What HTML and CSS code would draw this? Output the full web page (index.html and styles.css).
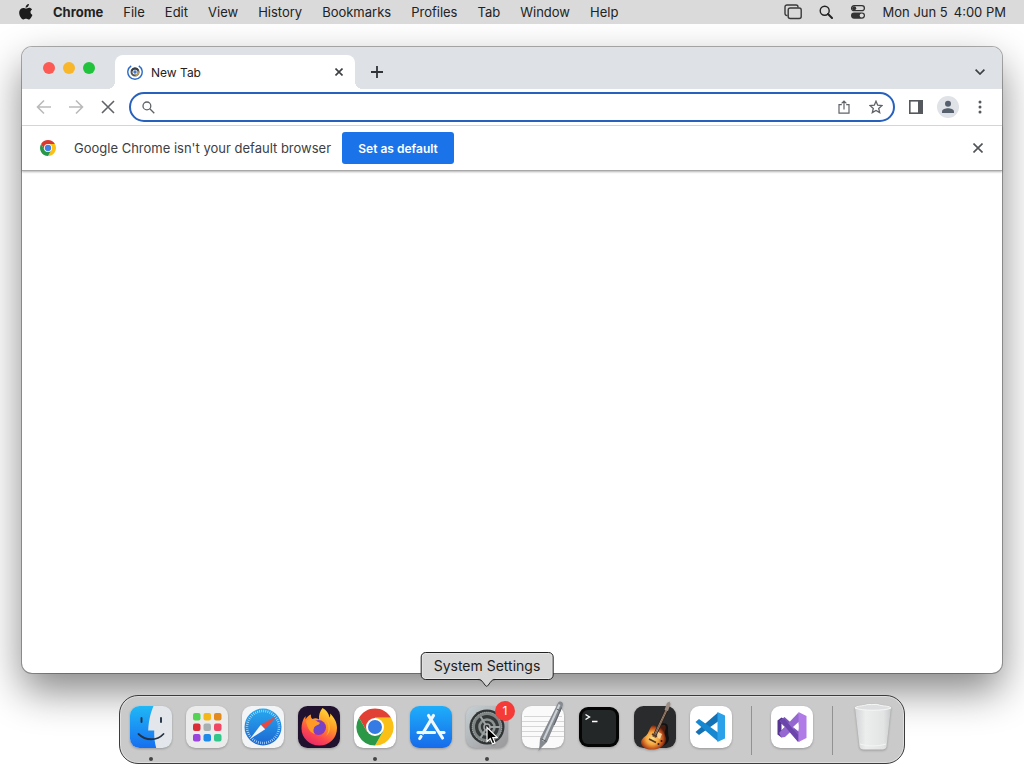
FILE: index.html
```html
<!DOCTYPE html>
<html lang="en">
<head>
    <meta charset="UTF-8">
    <meta name="viewport" content="width=device-width, initial-scale=1.0">
    <title>New Tab</title>
    <link rel="stylesheet" href="styles.css">
</head>
<body>
    <!-- Menu Bar -->
    <header class="menubar">
        <nav class="menus">
            <a href="#" class="apple" aria-label="Apple menu">
                <svg width="14" height="16" viewBox="0 0 14 16"><path fill="#1c1c1c" d="M9.9 0c.1 1-.3 1.900-.9 2.600-.6.700-1.500 1.200-2.400 1.100-.1-.9.300-1.900.9-2.500C8.100.500 9.100 0 9.900 0zM13.100 5.500c-1.100.7-1.600 1.500-1.600 2.600 0 1.300.7 2.300 1.900 2.800-.3.900-.7 1.700-1.300 2.500-.7 1.100-1.400 2.100-2.500 2.100s-1.400-.7-2.600-.7-1.600.7-2.600.7c-1.100 0-1.900-1-2.600-2C.3 11.600-.5 8.200.9 5.900c.7-1.200 2-2 3.300-2 1.200 0 2 .7 2.900.7s1.600-.8 3-.8c1.200 0 2.300.6 3 1.700z"/></svg>
            </a>
            <a href="#" class="app-name">Chrome</a>
            <a href="#">File</a>
            <a href="#">Edit</a>
            <a href="#">View</a>
            <a href="#">History</a>
            <a href="#">Bookmarks</a>
            <a href="#">Profiles</a>
            <a href="#">Tab</a>
            <a href="#">Window</a>
            <a href="#">Help</a>
        </nav>
        <div class="status">
            <button aria-label="Stage Manager">
                <svg width="18" height="16" viewBox="0 0 18 16" fill="none" stroke="#3a3a3a" stroke-width="1.400"><path d="M3.500 11.500H3a2 2 0 0 1-2-2V3a2 2 0 0 1 2-2h9a2 2 0 0 1 2 2v.5"/><rect x="4.200" y="4" width="13" height="10.500" rx="2"/></svg>
            </button>
            <button aria-label="Spotlight">
                <svg width="14" height="14" viewBox="0 0 14 14" fill="none" stroke="#222"><circle cx="5.700" cy="5.700" r="4.500" stroke-width="1.400"/><path d="M9 9l4 4" stroke-width="2" stroke-linecap="round"/></svg>
            </button>
            <button aria-label="Control Center">
                <svg width="16" height="14" viewBox="0 0 16 14"><rect x="1.600" y=".700" width="12.800" height="5" rx="2.500" fill="none" stroke="#333" stroke-width="1.300"/><circle cx="4.200" cy="3.200" r="2" fill="#333"/><rect x="1" y="7.500" width="14" height="6.200" rx="3.100" fill="#333"/><circle cx="11.700" cy="10.600" r="2" fill="#ddd"/></svg>
            </button>
            <time class="clock"><span>Mon Jun 5</span><span>4:00 PM</span></time>
        </div>
    </header>

    <!-- Browser Window -->
    <main class="window">
        <div class="tab-strip">
            <div class="lights">
                <button class="light red" aria-label="Close window"></button>
                <button class="light yellow" aria-label="Minimize"></button>
                <button class="light green" aria-label="Zoom"></button>
            </div>
            <div class="tab">
                <svg class="favicon" width="16" height="16" viewBox="0 0 16 16" fill="none"><path d="M4.200 1.900A7.200 7.200 0 1 0 11.800 1.900" stroke="#2b6bc9" stroke-width="1.400"/><circle cx="8" cy="8" r="3.500" stroke="#555" stroke-width="2"/><path d="M4.700 7A3.500 3.500 0 0 1 11 6.200" stroke="#3b3f48" stroke-width="2"/><path d="M11.300 7.500A3.500 3.500 0 0 1 8.500 11.400" stroke="#b59c61" stroke-width="2"/><circle cx="8" cy="8" r="1.700" fill="#4878c4"/></svg>
                <span class="tab-title">New Tab</span>
                <button class="tab-close" aria-label="Close tab">
                    <svg width="8" height="8" viewBox="0 0 8 8" stroke="#3c4043" stroke-width="1.600"><path d="M.5.5l7 7M7.500.5l-7 7"/></svg>
                </button>
            </div>
            <button class="new-tab" aria-label="New tab">
                <svg width="12" height="12" viewBox="0 0 12 12" stroke="#303338" stroke-width="1.800"><path d="M6 0v12M0 6h12"/></svg>
            </button>
            <button class="tab-search" aria-label="Search tabs">
                <svg width="10" height="6" viewBox="0 0 10 6" fill="none" stroke="#3c4043" stroke-width="1.700"><path d="M.600.700L5 5l4.400-4.300"/></svg>
            </button>
        </div>

        <div class="toolbar">
            <button class="tool" aria-label="Back">
                <svg width="16" height="16" viewBox="0 0 16 16" fill="none" stroke="#bababa" stroke-width="1.600"><path d="M15 8H2M8 1.500L1.500 8 8 14.500"/></svg>
            </button>
            <button class="tool" aria-label="Forward">
                <svg width="16" height="16" viewBox="0 0 16 16" fill="none" stroke="#bababa" stroke-width="1.600"><path d="M1 8h13M8 1.500L14.500 8 8 14.500"/></svg>
            </button>
            <button class="tool" aria-label="Stop">
                <svg width="14" height="14" viewBox="0 0 14 14" stroke="#5f6368" stroke-width="1.600"><path d="M1 1l12 12M13 1L1 13"/></svg>
            </button>
            <div class="omnibox">
                <svg width="13" height="13" viewBox="0 0 13 13" fill="none" stroke="#5f6368" stroke-width="1.300"><circle cx="4.900" cy="4.900" r="3.900"/><path d="M7.800 7.800L12.300 12.300"/></svg>
                <input type="text" aria-label="Address and search bar">
                <button class="tool" aria-label="Share">
                    <svg width="12" height="14" viewBox="0 0 12 14" fill="none" stroke="#5f6368" stroke-width="1.200"><path d="M3.800 4.700H1v8.500h10V4.700H8.200M6 9.500V1.200M3.600 3.400L6 1l2.400 2.400"/></svg>
                </button>
                <button class="tool" aria-label="Bookmark this tab">
                    <svg width="14" height="14" viewBox="0 0 14 14" fill="none" stroke="#5f6368" stroke-width="1.300"><path d="M7 1.200l1.700 4 4.300.4-3.300 2.800 1 4.200L7 10.400l-3.700 2.200 1-4.200L1 5.600l4.300-.4z"/></svg>
                </button>
            </div>
            <button class="tool" aria-label="Side panel">
                <svg width="14" height="14" viewBox="0 0 14 14"><rect x=".800" y=".800" width="12.400" height="12.400" fill="none" stroke="#55585c" stroke-width="1.600"/><path fill="#55585c" d="M9 0h5v14H9z"/></svg>
            </button>
            <button class="tool" aria-label="Profile">
                <svg width="22" height="22" viewBox="0 0 22 22"><circle cx="11" cy="11" r="11" fill="#dfe2e6"/><circle cx="11" cy="7.800" r="3" fill="#55606c"/><path fill="#55606c" d="M5 17v-1.500c0-2.200 3.500-3.300 6-3.300s6 1.100 6 3.300V17z"/></svg>
            </button>
            <button class="tool" aria-label="Chrome menu">
                <svg width="4" height="14" viewBox="0 0 4 14" fill="#55585c"><circle cx="2" cy="2" r="1.500"/><circle cx="2" cy="7" r="1.500"/><circle cx="2" cy="12" r="1.500"/></svg>
            </button>
        </div>

        <div class="infobar">
            <svg width="16" height="16" viewBox="-19 -19 38 38"><path fill="#d93a2f" d="M-16.450-9.500A19 19 0 0 1 16.450-9.500H0L-8.200 4.700z"/><path fill="#fbc116" d="M16.450-9.500A19 19 0 0 1 0 19L8.200 4.700 0-9.500z"/><path fill="#279847" d="M0 19A19 19 0 0 1-16.450-9.500L-8.200 4.700H8.200z"/><circle r="9.500" fill="#fff"/><circle r="7.500" fill="#4080e8"/></svg>
            <p>Google Chrome isn't your default browser</p>
            <button class="set-default">Set as default</button>
            <button class="info-close" aria-label="Dismiss">
                <svg width="10" height="10" viewBox="0 0 10 10" stroke="#505357" stroke-width="1.600"><path d="M.5.5l9 9M9.500.5l-9 9"/></svg>
            </button>
        </div>

        <div class="page"></div>
    </main>

    <!-- Dock -->
    <footer class="dock">
        <button class="dock-item running" aria-label="Finder">
            <svg viewBox="0 0 42 42">
                <defs>
                    <linearGradient id="finder" x2="0" y2="1"><stop stop-color="#1fb8f6"/><stop offset="1" stop-color="#176ff0"/></linearGradient>
                    <clipPath id="tile"><rect width="42" height="42" rx="9.500"/></clipPath>
                </defs>
                <g clip-path="url(#tile)">
                    <path fill="#e3e6ea" d="M0 0h42v42H0z"/>
                    <path fill="url(#finder)" d="M0 0h23.500c-3 7-4.800 14.500-5.300 24.500h6c-.2 7 .5 12 2 17.500H0z"/>
                </g>
                <path d="M11.500 12v4M31 12v4" stroke="#233245" stroke-width="1.900" stroke-linecap="round"/>
                <path d="M8.500 28c7 7 18.500 7 25 0" stroke="#233245" stroke-width="1.800" stroke-linecap="round" fill="none"/>
            </svg>
        </button>
        <button class="dock-item" aria-label="Launchpad">
            <svg viewBox="0 0 42 42">
                <rect width="42" height="42" rx="9.500" fill="#ebebeb"/>
                <rect x="7" y="7" width="7.500" height="7.500" rx="2" fill="#54d454"/><rect x="17.500" y="7" width="7.500" height="7.500" rx="2" fill="#f5b81b"/><rect x="28" y="7" width="7.500" height="7.500" rx="2" fill="#e28a1d"/>
                <rect x="7" y="17.500" width="7.500" height="7.500" rx="2" fill="#da2d35"/><rect x="17.500" y="17.500" width="7.500" height="7.500" rx="2" fill="#a9b0b0"/><rect x="28" y="17.500" width="7.500" height="7.500" rx="2" fill="#f04563"/>
                <rect x="7" y="28" width="7.500" height="7.500" rx="2" fill="#9a43dd"/><rect x="17.500" y="28" width="7.500" height="7.500" rx="2" fill="#1f8be8"/><rect x="28" y="28" width="7.500" height="7.500" rx="2" fill="#31c78b"/>
            </svg>
        </button>
        <button class="dock-item" aria-label="Safari">
            <svg viewBox="0 0 42 42">
                <defs><linearGradient id="safari" x2="0" y2="1"><stop stop-color="#27a9ef"/><stop offset="1" stop-color="#1c66d2"/></linearGradient></defs>
                <rect width="42" height="42" rx="9.500" fill="#f3f4f5"/>
                <circle cx="21" cy="21" r="18.500" fill="url(#safari)"/>
                <circle cx="21" cy="21" r="16" fill="none" stroke="#c6e3f8" stroke-width="2.500" stroke-dasharray=".700 1.393"/>
                <path fill="#e8483f" d="M34.500 10L23.200 23.300 18.800 18.700z"/>
                <path fill="#f2f5f8" d="M8 33L18.800 18.700 23.200 23.300z"/>
            </svg>
        </button>
        <button class="dock-item" aria-label="Firefox">
            <svg viewBox="0 0 42 42">
                <defs>
                    <linearGradient id="fox" x1=".8" y1="0" x2=".3" y2="1"><stop stop-color="#ffe23f"/><stop offset=".4" stop-color="#ff9a24"/><stop offset=".75" stop-color="#fb4650"/><stop offset="1" stop-color="#e8276a"/></linearGradient>
                    <radialGradient id="globe"><stop stop-color="#5a50cf"/><stop offset="1" stop-color="#8d38bd"/></radialGradient>
                </defs>
                <rect width="42" height="42" rx="9.500" fill="#20122f"/>
                <path fill="url(#fox)" d="M24.500 2c4 2 6.200 5.500 7 9.500 1-1 .8-2.800.5-4 4.500 4 7 9 7 14.500C39 32 31.500 39.500 21.500 39.500S3.500 32 3.500 22.500c0-4.500 1-9 4-12.500v3.500c1.500-2.500 3-4 5.500-5-.5 2 .2 3.700 1.500 4.500 2.200-1 4.500-.8 6.500.5-.5-4.500 1-8.500 3.500-11.500z"/>
                <circle cx="20.500" cy="21.500" r="7.500" fill="url(#globe)"/>
                <path fill="#ff9a26" d="M8 15c3-2.500 8-2.200 12 1 1.800.2 2.200 1 1.500 1.800-1.200 1.600-4.500 1.500-5.500 4.200-1 2.400-.6 4.500 1 6-4.500-.8-8-6-9-13z"/>
                <path fill="#ffb52d" d="M27 12c6 4 7 13 1 18 3.700-5 3.300-12-1-18z"/>
            </svg>
        </button>
        <button class="dock-item running" aria-label="Google Chrome">
            <svg viewBox="0 0 42 42">
                <rect width="42" height="42" rx="9.500" fill="#fff"/>
                <g transform="translate(21 21)">
                    <path fill="#e04134" d="M-16-9.300A18.500 18.500 0 0 1 16-9.300H0L-8 4.600z"/>
                    <path fill="#fbc016" d="M16-9.300A18.500 18.500 0 0 1 0 18.500L8 4.600 0-9.300z"/>
                    <path fill="#2a9846" d="M0 18.500A18.500 18.500 0 0 1-16-9.300L-8 4.600H8z"/>
                    <circle r="9" fill="#fff"/><circle r="7" fill="#347be3"/>
                </g>
            </svg>
        </button>
        <button class="dock-item" aria-label="App Store">
            <svg viewBox="0 0 42 42">
                <defs><linearGradient id="store" x2="0" y2="1"><stop stop-color="#1eaefa"/><stop offset="1" stop-color="#176bea"/></linearGradient></defs>
                <rect width="42" height="42" rx="9.500" fill="url(#store)"/>
                <path d="M18.500 9.500L32.500 32M23.500 9.500L13 27M8 26.500h16.500M29.500 26.500H34M11 30.500L9.700 32.500" stroke="#f2f8ff" stroke-width="3.200" stroke-linecap="round"/>
            </svg>
        </button>
        <button class="dock-item running" aria-label="System Settings">
            <svg viewBox="0 0 42 42">
                <defs><linearGradient id="gear" x2="1" y2="1"><stop stop-color="#c6d0d4"/><stop offset="1" stop-color="#99979a"/></linearGradient></defs>
                <rect width="42" height="42" rx="9.500" fill="url(#gear)"/>
                <circle cx="21" cy="21" r="17.500" fill="#303434"/>
                <circle cx="21" cy="21" r="15" fill="#7f8484"/>
                <circle cx="21" cy="21" r="14.800" fill="none" stroke="#b4b9b9" stroke-width="1" stroke-dasharray="1 1"/>
                <circle cx="21" cy="21" r="12" fill="#343838"/>
                <circle cx="21" cy="21" r="7.500" fill="none" stroke="#8d9393" stroke-width="2.600"/>
                <path d="M21 21L14.500 10.500M21 21h13M21 21L14.500 32" stroke="#9ca2a2" stroke-width="2"/>
                <circle cx="21" cy="21" r="3" fill="#303334" stroke="#a4a8a9" stroke-width="1.500"/>
            </svg>
            <span class="badge">1</span>
            <span class="tooltip">System Settings
                <svg class="tooltip-arrow" width="18" height="9" viewBox="0 0 18 9"><path fill="#d7d7d7" d="M0 0h18v1c-3 0-4 1.500-5.500 3.500C11 6.500 10 8.300 9 8.300S7 6.500 5.500 4.500C4 2.500 3 1 0 1z"/><path fill="none" stroke="#222" d="M0 1.500c3 0 4 1 5.500 3S8 8.300 9 8.300s2-1.800 3.500-3.800 2.500-3 5.500-3"/></svg>
            </span>
            <svg class="cursor" viewBox="0 0 13 19"><path fill="#000" stroke="#fff" stroke-width="1.200" d="M1 1.500v14l3.300-3 2.200 5.300 2.500-1-2.200-5.200h4.500z"/></svg>
        </button>
        <button class="dock-item" aria-label="TextEdit">
            <svg viewBox="0 0 42 42">
                <rect width="42" height="42" rx="9.500" fill="#fafafa"/>
                <path d="M2 10.500h38M0 15.500h42M0 20.500h42M0 25.500h42M0 30.500h42" stroke="#d6d6d6"/>
                <path fill="#858a90" d="M38.500-4.500c2 .5 3 2 2.200 4L25 36l-5 5-3.500 4 1-5.500.5-7L36-3c.7-1.200 1.500-1.700 2.500-1.500z"/>
                <path d="M37.500-1.500L21 35" stroke="#ccd1d6" stroke-width="2"/>
                <path d="M34.500 3l4.500 2M19.500 33l5 2.500" stroke="#565b60" stroke-width=".900"/>
                <path d="M39.500 1.500L32 19" stroke="#62676d" stroke-width="1.200"/>
            </svg>
        </button>
        <button class="dock-item" aria-label="Terminal">
            <svg viewBox="0 0 42 42">
                <rect x="1" y="1" width="40" height="40" rx="9" fill="#050505"/><rect x="4" y="4" width="34" height="34" rx="6" fill="#242728"/>
                <path d="M7.500 8.500l4 2.500-4 2.500M14 15.500h5.500" stroke="#fff" stroke-width="1.400" fill="none"/>
            </svg>
        </button>
        <button class="dock-item" aria-label="GarageBand">
            <svg viewBox="0 0 42 42">
                <defs><radialGradient id="guitar" cx=".45" cy=".55" r=".55"><stop stop-color="#ffdf8a"/><stop offset=".45" stop-color="#f5a63f"/><stop offset=".8" stop-color="#b8481a"/><stop offset="1" stop-color="#4a1c10"/></radialGradient></defs>
                <rect width="42" height="42" rx="9.500" fill="#2a2b2c"/>
                <path fill="#111" d="M25 19c4-3 9-2 9 2 0 5 0 7 1 11 0 6-6 9-14 10z"/>
                <path fill="url(#guitar)" d="M17.500 20c1.800-2 4-1 5.500 1.500 2.500 0 4-3.200 7-2.700 3 .7 1.500 4.500.7 7.200-.7 3 2.300 5 1.300 9-1.300 5.500-7 7.800-12.500 8.500-5.500.6-11-1-12.300-5.500-1-4 2-6 5-8.500 2.500-2.500 3-6.500 5.300-9.500z"/>
                <path d="M20 31L32.500 4" stroke="#30231d" stroke-width="3.600"/>
                <path d="M19.500 30.500L32 4M20.500 31L33.500 3" stroke="#c4a68c" stroke-width=".700"/>
                <path fill="#9b8d84" d="M30.500 4L33-3l2.500-1.500 1 2.500-2.500 7z"/>
                <path d="M18 28l6 3M15 33l7 3.500" stroke="#59391f" stroke-width="1.800"/>
                <path fill="#f4d298" d="M24 26l4 2-2 5-3-1.500z"/>
                <circle cx="27.500" cy="35" r="1" fill="#2c1a12"/><circle cx="24.500" cy="38" r="1" fill="#2c1a12"/>
            </svg>
        </button>
        <button class="dock-item" aria-label="Visual Studio Code">
            <svg viewBox="0 0 42 42">
                <rect width="42" height="42" rx="9.500" fill="#fff"/>
                <path fill="#1371b5" d="M5.500 26L28 6.500v9L9 29z"/>
                <path fill="#1688d1" d="M5.500 16L28 35.500v-9L9 13z"/>
                <path fill="#2ba1ea" d="M27.500 6l7.500 3.500v23L27.500 36z"/>
            </svg>
        </button>
        <span class="divider"></span>
        <button class="dock-item" aria-label="Visual Studio">
            <svg viewBox="0 0 42 42">
                <rect width="42" height="42" rx="9.500" fill="#fff"/>
                <path fill="#55358f" d="M6.500 14.500l4-3 3 1.500v16l-3 2.500-4-3z"/>
                <path fill="#fff" d="M10.500 17.500v7l3.500-3.500z"/>
                <path fill="#7c55ba" d="M13.500 11L32 27.500 28 36 8.500 15z"/>
                <path fill="#9567d0" d="M10.500 31.500l3.500-.5L30 16 27.500 6.500 8 27z"/>
                <path fill="#6c45aa" d="M13.500 13L27 29v7L8.500 14z"/>
                <path fill="#b07be6" d="M27.500 6l8 4v22l-8 4z"/>
                <path fill="#fff" d="M27.500 16v9.500L22 21z"/>
            </svg>
        </button>
        <span class="divider"></span>
        <button class="dock-item trash" aria-label="Trash">
            <svg viewBox="0 0 42 42">
                <defs><linearGradient id="bin"><stop stop-color="#d3d5d6"/><stop offset=".3" stop-color="#eceded"/><stop offset=".8" stop-color="#e2e4e4"/><stop offset="1" stop-color="#c9cccd"/></linearGradient></defs>
                <path fill="url(#bin)" d="M3 1h36l-4.500 39.500c-.3 2-2 3-4 3h-19c-2 0-3.700-1-4-3z"/>
                <path fill="#dedfe0" stroke="#f6f6f6" d="M3 2C4 0 11 0 14-1c3-1.200 5 0 8-.5s5 .5 7 1 9 .5 10 2.500c-6 3-30 3-36 0z"/>
                <path d="M8 38c8 2.500 18 2.500 26 0" fill="none" stroke="#f5f5f5"/>
            </svg>
        </button>
    </footer>
</body>
</html>
```
FILE: styles.css
```css
* {
    margin: 0;
    padding: 0;
    box-sizing: border-box;
}

body {
    min-height: 100vh;
    display: flex;
    flex-direction: column;
    align-items: center;
    background: #fff;
    color: #222;
    font-family: Inter, "Liberation Sans", sans-serif;
    font-size: 13px;
    overflow: hidden;
}

button {
    display: flex;
    align-items: center;
    justify-content: center;
    border: none;
    background: none;
    font: inherit;
    color: inherit;
}

a {
    color: inherit;
    text-decoration: none;
}

svg {
    display: block;
    flex: none;
}

/* Menu bar */
.menubar {
    width: 100%;
    height: 24px;
    display: flex;
    justify-content: space-between;
    align-items: center;
    padding: 0 18px 0 19px;
    background: #dadada;
    position: relative;
    z-index: 2;
}

.menus {
    display: flex;
    align-items: center;
    gap: 20px;
}

.app-name {
    font-weight: 700;
}

.status {
    display: flex;
    align-items: center;
    gap: 17px;
}

.clock {
    display: flex;
    gap: 6px;
}

/* Browser window */
.window {
    width: calc(100% - 44px);
    flex: 1;
    display: flex;
    flex-direction: column;
    margin: 23px 0 22px;
    background: #fff;
    border-radius: 10px;
    box-shadow: 0 0 0 1px rgba(0, 0, 0, 0.3), 0 18px 40px rgba(0, 0, 0, 0.48);
}

.tab-strip {
    height: 42px;
    display: flex;
    align-items: flex-end;
    background: #dee1e6;
    border-radius: 10px 10px 0 0;
}

.lights {
    display: flex;
    align-self: center;
    gap: 8px;
    width: 93px;
    padding-left: 21px;
}

.light {
    width: 12px;
    height: 12px;
    border-radius: 50%;
}

.red {
    background: #fb5b54;
}

.yellow {
    background: #f8b62b;
}

.green {
    background: #22c33c;
}

.tab {
    position: relative;
    display: flex;
    align-items: center;
    width: 240px;
    height: 34px;
    padding: 0 8px 0 12px;
    background: #fff;
    border-radius: 8px 8px 0 0;
    font-size: 12px;
}

/* outward curves at the foot of the tab */
.tab::before,
.tab::after {
    content: "";
    position: absolute;
    bottom: 0;
    width: 8px;
    height: 8px;
}

.tab::before {
    left: -8px;
    background: radial-gradient(circle at 0 0, transparent 8px, #fff 8px);
}

.tab::after {
    right: -8px;
    background: radial-gradient(circle at 100% 0, transparent 8px, #fff 8px);
}

.tab-title {
    flex: 1;
    padding-left: 8px;
}

.tab-close {
    width: 16px;
    height: 16px;
}

.new-tab,
.tab-search {
    width: 28px;
    height: 34px;
}

.new-tab {
    margin-left: 8px;
}

.tab-search {
    margin-left: auto;
    margin-right: 8px;
}

.toolbar {
    height: 37px;
    display: flex;
    align-items: center;
    padding: 0 6px;
    border-bottom: 1px solid #d8dadd;
}

.tool {
    width: 32px;
    height: 28px;
}

.omnibox {
    flex: 1;
    height: 30px;
    display: flex;
    align-items: center;
    margin: 0 5px;
    padding: 0 1px 0 11px;
    border: 2px solid #2761bd;
    border-radius: 15px;
}

.omnibox input {
    flex: 1;
    min-width: 0;
    padding: 0 8px;
    border: none;
    outline: none;
    background: none;
    font: inherit;
}

.infobar {
    height: 45px;
    display: flex;
    align-items: center;
    padding: 0 14px 0 18px;
    border-bottom: 1px solid #a8a8a8;
    box-shadow: 0 1px 2px rgba(0, 0, 0, 0.3);
    color: #3c4043;
}

.infobar p {
    margin: 0 11px 0 18px;
}

.set-default {
    width: 112px;
    height: 32px;
    border-radius: 3px;
    background: #1a73e8;
    color: #fff;
    font-size: 12px;
    font-weight: 600;
}

.info-close {
    width: 20px;
    height: 20px;
    margin-left: auto;
}

.page {
    flex: 1;
}

/* Dock */
.dock {
    position: relative;
    height: 69px;
    display: flex;
    align-items: flex-start;
    gap: 14px;
    margin-bottom: 4px;
    padding: 10px;
    border: 1px solid #3c3c3c;
    border-radius: 19px;
    background: #cacaca;
    box-shadow: inset 0 0 0 1px #dedede;
}

.dock-item {
    position: relative;
    width: 42px;
    height: 42px;
}

.dock-item > svg {
    width: 42px;
    height: 42px;
    overflow: visible;
    filter: drop-shadow(0 1px 1px rgba(0, 0, 0, 0.25));
}

.running::after {
    content: "";
    position: absolute;
    bottom: -13px;
    left: 19px;
    width: 4px;
    height: 4px;
    border-radius: 50%;
    background: #444;
}

.divider {
    width: 1px;
    height: 49px;
    margin: 0 5px;
    background: #929292;
}

.badge {
    position: absolute;
    top: -5px;
    right: -7px;
    width: 20px;
    height: 20px;
    border-radius: 50%;
    background: #f53b37;
    color: #fff;
    font-size: 12px;
    line-height: 20px;
    text-align: center;
}

.tooltip {
    position: absolute;
    bottom: 68px;
    left: 50%;
    transform: translateX(-50%);
    height: 28px;
    padding: 0 12px;
    border: 1px solid #222;
    border-radius: 5px;
    background: #d7d7d7;
    box-shadow: inset 0 0 0 1px #e6e6e6;
    color: #1c1c1c;
    font-size: 14px;
    line-height: 26px;
    white-space: nowrap;
}

.tooltip-arrow {
    position: absolute;
    top: 25px;
    left: calc(50% - 9px);
}

.dock-item > .cursor {
    position: absolute;
    top: 20px;
    left: 20px;
    width: 13px;
    height: 19px;
}
```
